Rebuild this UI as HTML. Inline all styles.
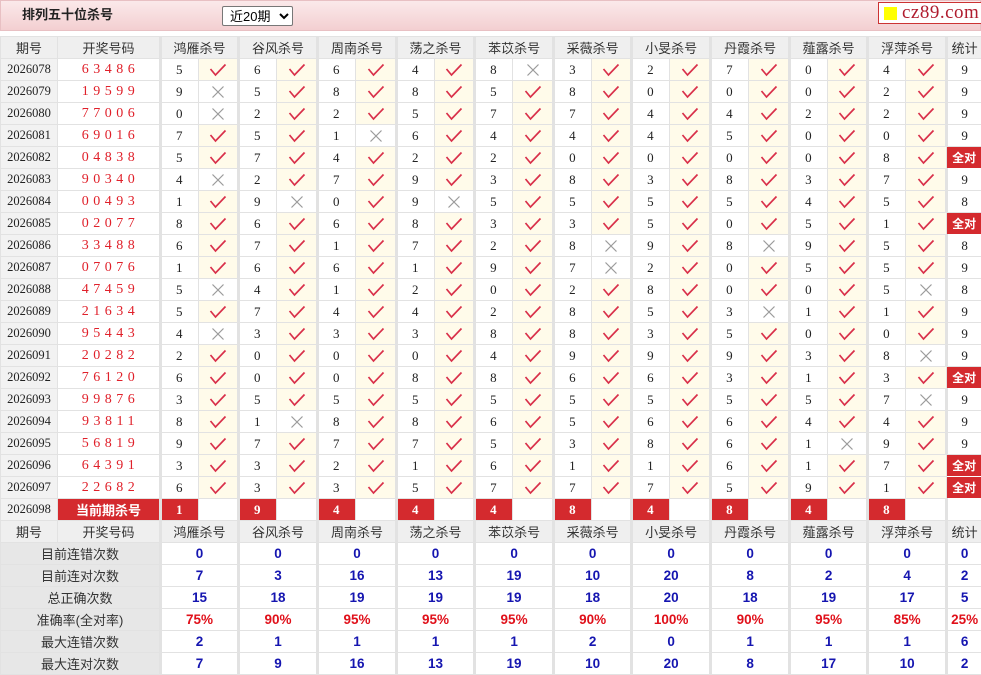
<!DOCTYPE html>
<html><head><meta charset="utf-8">
<style>
*{margin:0;padding:0;box-sizing:border-box}
body{width:981px;height:674px;overflow:hidden;background:#fff;font-family:"Liberation Sans","Noto Sans CJK SC",sans-serif;font-size:13px;color:#222}
.top{position:absolute;left:0;top:0;width:981px;height:31px;background:linear-gradient(#fbe9ea,#f3cfd1);border:1px solid #e8c0c3}
.top .t{position:absolute;left:21px;top:6px;line-height:16px;font-weight:bold;font-size:13px;color:#222}
.top select{position:absolute;left:221px;top:5px;width:71px;height:20px;font-size:13px;font-family:"Liberation Sans","Noto Sans CJK SC",sans-serif;border:1px solid #777;border-radius:2px;background:#fff;padding-left:3px}
.logo{position:absolute;left:877px;top:1px;width:104px;height:22px;border:1px solid #c33;background:#fff;font-family:"Liberation Serif",serif;font-size:19px;color:#b01c2e;line-height:19px;padding-left:23px;letter-spacing:0.5px}
.logo i{position:absolute;left:5px;top:4px;width:13px;height:13px;background:#ff0}
table{position:absolute;left:0;top:36px;border-collapse:collapse;table-layout:fixed;width:981px}
td{height:22px;border:1px solid #e2e2e2;text-align:center;padding:0;white-space:nowrap;overflow:hidden;font-family:"Liberation Serif","Noto Sans CJK SC",serif;font-size:13px}
tr.h td{background:#efefef;font-family:"Liberation Sans","Noto Sans CJK SC",sans-serif;color:#333}
td.p{background:#f2f2f2;font-size:12.5px}
td.d{color:#e0202a;letter-spacing:4.5px;font-size:14px;padding-left:4px}
td.g{border-left:3px solid #e2e2e2}
td.n{text-align:left;padding-left:14px}
td.c{background:#fffbea}
td.q{background:#d42a2e;color:#fff;font-weight:bold;font-family:"Liberation Sans","Noto Sans CJK SC",sans-serif;font-size:12px;border:1px solid #fff}
td.k{background:#d42a2e;color:#fff;font-weight:bold;text-align:left;padding-left:14px}
td.kk{background:#d42a2e;color:#fff;font-weight:bold;font-family:"Liberation Sans","Noto Sans CJK SC",sans-serif}
td.l{background:#e7e7e7;font-family:"Liberation Sans","Noto Sans CJK SC",sans-serif;color:#333}
td.s{color:#1515b0;font-weight:bold;font-family:"Liberation Sans",sans-serif;font-size:13.5px}
td.r{color:#e0101a;font-weight:bold;font-family:"Liberation Sans",sans-serif;font-size:13.5px}
svg{display:block;margin:auto}
</style></head><body>
<svg width="0" height="0" style="position:absolute"><defs>
<symbol id="ok" viewBox="0 0 18 14"><path d="M1.5 6 L6.5 12 L16.5 1.5" fill="none" stroke="#d9304a" stroke-width="1.7"/></symbol>
<symbol id="no" viewBox="0 0 14 14"><path d="M1.5 1.5 L12.5 12.5 M12.5 1.5 L1.5 12.5" fill="none" stroke="#9a9a9a" stroke-width="1.2"/></symbol>
</defs></svg>
<div class="top"><span class="t">排列五十位杀号</span><select><option>近20期</option></select><div class="logo"><i></i>cz89.com</div></div>
<table id="t">
<colgroup><col style="width:57px"><col style="width:103px">
<col style="width:38px"><col style="width:40px"><col style="width:38px"><col style="width:41px"><col style="width:38px"><col style="width:41px"><col style="width:38px"><col style="width:40px"><col style="width:38px"><col style="width:41px"><col style="width:38px"><col style="width:40px"><col style="width:38px"><col style="width:41px"><col style="width:38px"><col style="width:41px"><col style="width:38px"><col style="width:40px"><col style="width:38px"><col style="width:41px"><col style="width:35px"></colgroup>
<tr class="h"><td>期号</td><td>开奖号码</td><td class="g" colspan="2">鸿雁杀号</td><td class="g" colspan="2">谷风杀号</td><td class="g" colspan="2">周南杀号</td><td class="g" colspan="2">荡之杀号</td><td class="g" colspan="2">苯苡杀号</td><td class="g" colspan="2">采薇杀号</td><td class="g" colspan="2">小旻杀号</td><td class="g" colspan="2">丹霞杀号</td><td class="g" colspan="2">薤露杀号</td><td class="g" colspan="2">浮萍杀号</td><td class="g">统计</td></tr>
<tr><td class="p">2026078</td><td class="d">63486</td><td class="g n">5</td><td class="c"><svg width="18" height="14"><use href="#ok"/></svg></td><td class="g n">6</td><td class="c"><svg width="18" height="14"><use href="#ok"/></svg></td><td class="g n">6</td><td class="c"><svg width="18" height="14"><use href="#ok"/></svg></td><td class="g n">4</td><td class="c"><svg width="18" height="14"><use href="#ok"/></svg></td><td class="g n">8</td><td><svg width="14" height="14"><use href="#no"/></svg></td><td class="g n">3</td><td class="c"><svg width="18" height="14"><use href="#ok"/></svg></td><td class="g n">2</td><td class="c"><svg width="18" height="14"><use href="#ok"/></svg></td><td class="g n">7</td><td class="c"><svg width="18" height="14"><use href="#ok"/></svg></td><td class="g n">0</td><td class="c"><svg width="18" height="14"><use href="#ok"/></svg></td><td class="g n">4</td><td class="c"><svg width="18" height="14"><use href="#ok"/></svg></td><td class="g">9</td></tr>
<tr><td class="p">2026079</td><td class="d">19599</td><td class="g n">9</td><td><svg width="14" height="14"><use href="#no"/></svg></td><td class="g n">5</td><td class="c"><svg width="18" height="14"><use href="#ok"/></svg></td><td class="g n">8</td><td class="c"><svg width="18" height="14"><use href="#ok"/></svg></td><td class="g n">8</td><td class="c"><svg width="18" height="14"><use href="#ok"/></svg></td><td class="g n">5</td><td class="c"><svg width="18" height="14"><use href="#ok"/></svg></td><td class="g n">8</td><td class="c"><svg width="18" height="14"><use href="#ok"/></svg></td><td class="g n">0</td><td class="c"><svg width="18" height="14"><use href="#ok"/></svg></td><td class="g n">0</td><td class="c"><svg width="18" height="14"><use href="#ok"/></svg></td><td class="g n">0</td><td class="c"><svg width="18" height="14"><use href="#ok"/></svg></td><td class="g n">2</td><td class="c"><svg width="18" height="14"><use href="#ok"/></svg></td><td class="g">9</td></tr>
<tr><td class="p">2026080</td><td class="d">77006</td><td class="g n">0</td><td><svg width="14" height="14"><use href="#no"/></svg></td><td class="g n">2</td><td class="c"><svg width="18" height="14"><use href="#ok"/></svg></td><td class="g n">2</td><td class="c"><svg width="18" height="14"><use href="#ok"/></svg></td><td class="g n">5</td><td class="c"><svg width="18" height="14"><use href="#ok"/></svg></td><td class="g n">7</td><td class="c"><svg width="18" height="14"><use href="#ok"/></svg></td><td class="g n">7</td><td class="c"><svg width="18" height="14"><use href="#ok"/></svg></td><td class="g n">4</td><td class="c"><svg width="18" height="14"><use href="#ok"/></svg></td><td class="g n">4</td><td class="c"><svg width="18" height="14"><use href="#ok"/></svg></td><td class="g n">2</td><td class="c"><svg width="18" height="14"><use href="#ok"/></svg></td><td class="g n">2</td><td class="c"><svg width="18" height="14"><use href="#ok"/></svg></td><td class="g">9</td></tr>
<tr><td class="p">2026081</td><td class="d">69016</td><td class="g n">7</td><td class="c"><svg width="18" height="14"><use href="#ok"/></svg></td><td class="g n">5</td><td class="c"><svg width="18" height="14"><use href="#ok"/></svg></td><td class="g n">1</td><td><svg width="14" height="14"><use href="#no"/></svg></td><td class="g n">6</td><td class="c"><svg width="18" height="14"><use href="#ok"/></svg></td><td class="g n">4</td><td class="c"><svg width="18" height="14"><use href="#ok"/></svg></td><td class="g n">4</td><td class="c"><svg width="18" height="14"><use href="#ok"/></svg></td><td class="g n">4</td><td class="c"><svg width="18" height="14"><use href="#ok"/></svg></td><td class="g n">5</td><td class="c"><svg width="18" height="14"><use href="#ok"/></svg></td><td class="g n">0</td><td class="c"><svg width="18" height="14"><use href="#ok"/></svg></td><td class="g n">0</td><td class="c"><svg width="18" height="14"><use href="#ok"/></svg></td><td class="g">9</td></tr>
<tr><td class="p">2026082</td><td class="d">04838</td><td class="g n">5</td><td class="c"><svg width="18" height="14"><use href="#ok"/></svg></td><td class="g n">7</td><td class="c"><svg width="18" height="14"><use href="#ok"/></svg></td><td class="g n">4</td><td class="c"><svg width="18" height="14"><use href="#ok"/></svg></td><td class="g n">2</td><td class="c"><svg width="18" height="14"><use href="#ok"/></svg></td><td class="g n">2</td><td class="c"><svg width="18" height="14"><use href="#ok"/></svg></td><td class="g n">0</td><td class="c"><svg width="18" height="14"><use href="#ok"/></svg></td><td class="g n">0</td><td class="c"><svg width="18" height="14"><use href="#ok"/></svg></td><td class="g n">0</td><td class="c"><svg width="18" height="14"><use href="#ok"/></svg></td><td class="g n">0</td><td class="c"><svg width="18" height="14"><use href="#ok"/></svg></td><td class="g n">8</td><td class="c"><svg width="18" height="14"><use href="#ok"/></svg></td><td class="g q">全对</td></tr>
<tr><td class="p">2026083</td><td class="d">90340</td><td class="g n">4</td><td><svg width="14" height="14"><use href="#no"/></svg></td><td class="g n">2</td><td class="c"><svg width="18" height="14"><use href="#ok"/></svg></td><td class="g n">7</td><td class="c"><svg width="18" height="14"><use href="#ok"/></svg></td><td class="g n">9</td><td class="c"><svg width="18" height="14"><use href="#ok"/></svg></td><td class="g n">3</td><td class="c"><svg width="18" height="14"><use href="#ok"/></svg></td><td class="g n">8</td><td class="c"><svg width="18" height="14"><use href="#ok"/></svg></td><td class="g n">3</td><td class="c"><svg width="18" height="14"><use href="#ok"/></svg></td><td class="g n">8</td><td class="c"><svg width="18" height="14"><use href="#ok"/></svg></td><td class="g n">3</td><td class="c"><svg width="18" height="14"><use href="#ok"/></svg></td><td class="g n">7</td><td class="c"><svg width="18" height="14"><use href="#ok"/></svg></td><td class="g">9</td></tr>
<tr><td class="p">2026084</td><td class="d">00493</td><td class="g n">1</td><td class="c"><svg width="18" height="14"><use href="#ok"/></svg></td><td class="g n">9</td><td><svg width="14" height="14"><use href="#no"/></svg></td><td class="g n">0</td><td class="c"><svg width="18" height="14"><use href="#ok"/></svg></td><td class="g n">9</td><td><svg width="14" height="14"><use href="#no"/></svg></td><td class="g n">5</td><td class="c"><svg width="18" height="14"><use href="#ok"/></svg></td><td class="g n">5</td><td class="c"><svg width="18" height="14"><use href="#ok"/></svg></td><td class="g n">5</td><td class="c"><svg width="18" height="14"><use href="#ok"/></svg></td><td class="g n">5</td><td class="c"><svg width="18" height="14"><use href="#ok"/></svg></td><td class="g n">4</td><td class="c"><svg width="18" height="14"><use href="#ok"/></svg></td><td class="g n">5</td><td class="c"><svg width="18" height="14"><use href="#ok"/></svg></td><td class="g">8</td></tr>
<tr><td class="p">2026085</td><td class="d">02077</td><td class="g n">8</td><td class="c"><svg width="18" height="14"><use href="#ok"/></svg></td><td class="g n">6</td><td class="c"><svg width="18" height="14"><use href="#ok"/></svg></td><td class="g n">6</td><td class="c"><svg width="18" height="14"><use href="#ok"/></svg></td><td class="g n">8</td><td class="c"><svg width="18" height="14"><use href="#ok"/></svg></td><td class="g n">3</td><td class="c"><svg width="18" height="14"><use href="#ok"/></svg></td><td class="g n">3</td><td class="c"><svg width="18" height="14"><use href="#ok"/></svg></td><td class="g n">5</td><td class="c"><svg width="18" height="14"><use href="#ok"/></svg></td><td class="g n">0</td><td class="c"><svg width="18" height="14"><use href="#ok"/></svg></td><td class="g n">5</td><td class="c"><svg width="18" height="14"><use href="#ok"/></svg></td><td class="g n">1</td><td class="c"><svg width="18" height="14"><use href="#ok"/></svg></td><td class="g q">全对</td></tr>
<tr><td class="p">2026086</td><td class="d">33488</td><td class="g n">6</td><td class="c"><svg width="18" height="14"><use href="#ok"/></svg></td><td class="g n">7</td><td class="c"><svg width="18" height="14"><use href="#ok"/></svg></td><td class="g n">1</td><td class="c"><svg width="18" height="14"><use href="#ok"/></svg></td><td class="g n">7</td><td class="c"><svg width="18" height="14"><use href="#ok"/></svg></td><td class="g n">2</td><td class="c"><svg width="18" height="14"><use href="#ok"/></svg></td><td class="g n">8</td><td><svg width="14" height="14"><use href="#no"/></svg></td><td class="g n">9</td><td class="c"><svg width="18" height="14"><use href="#ok"/></svg></td><td class="g n">8</td><td><svg width="14" height="14"><use href="#no"/></svg></td><td class="g n">9</td><td class="c"><svg width="18" height="14"><use href="#ok"/></svg></td><td class="g n">5</td><td class="c"><svg width="18" height="14"><use href="#ok"/></svg></td><td class="g">8</td></tr>
<tr><td class="p">2026087</td><td class="d">07076</td><td class="g n">1</td><td class="c"><svg width="18" height="14"><use href="#ok"/></svg></td><td class="g n">6</td><td class="c"><svg width="18" height="14"><use href="#ok"/></svg></td><td class="g n">6</td><td class="c"><svg width="18" height="14"><use href="#ok"/></svg></td><td class="g n">1</td><td class="c"><svg width="18" height="14"><use href="#ok"/></svg></td><td class="g n">9</td><td class="c"><svg width="18" height="14"><use href="#ok"/></svg></td><td class="g n">7</td><td><svg width="14" height="14"><use href="#no"/></svg></td><td class="g n">2</td><td class="c"><svg width="18" height="14"><use href="#ok"/></svg></td><td class="g n">0</td><td class="c"><svg width="18" height="14"><use href="#ok"/></svg></td><td class="g n">5</td><td class="c"><svg width="18" height="14"><use href="#ok"/></svg></td><td class="g n">5</td><td class="c"><svg width="18" height="14"><use href="#ok"/></svg></td><td class="g">9</td></tr>
<tr><td class="p">2026088</td><td class="d">47459</td><td class="g n">5</td><td><svg width="14" height="14"><use href="#no"/></svg></td><td class="g n">4</td><td class="c"><svg width="18" height="14"><use href="#ok"/></svg></td><td class="g n">1</td><td class="c"><svg width="18" height="14"><use href="#ok"/></svg></td><td class="g n">2</td><td class="c"><svg width="18" height="14"><use href="#ok"/></svg></td><td class="g n">0</td><td class="c"><svg width="18" height="14"><use href="#ok"/></svg></td><td class="g n">2</td><td class="c"><svg width="18" height="14"><use href="#ok"/></svg></td><td class="g n">8</td><td class="c"><svg width="18" height="14"><use href="#ok"/></svg></td><td class="g n">0</td><td class="c"><svg width="18" height="14"><use href="#ok"/></svg></td><td class="g n">0</td><td class="c"><svg width="18" height="14"><use href="#ok"/></svg></td><td class="g n">5</td><td><svg width="14" height="14"><use href="#no"/></svg></td><td class="g">8</td></tr>
<tr><td class="p">2026089</td><td class="d">21634</td><td class="g n">5</td><td class="c"><svg width="18" height="14"><use href="#ok"/></svg></td><td class="g n">7</td><td class="c"><svg width="18" height="14"><use href="#ok"/></svg></td><td class="g n">4</td><td class="c"><svg width="18" height="14"><use href="#ok"/></svg></td><td class="g n">4</td><td class="c"><svg width="18" height="14"><use href="#ok"/></svg></td><td class="g n">2</td><td class="c"><svg width="18" height="14"><use href="#ok"/></svg></td><td class="g n">8</td><td class="c"><svg width="18" height="14"><use href="#ok"/></svg></td><td class="g n">5</td><td class="c"><svg width="18" height="14"><use href="#ok"/></svg></td><td class="g n">3</td><td><svg width="14" height="14"><use href="#no"/></svg></td><td class="g n">1</td><td class="c"><svg width="18" height="14"><use href="#ok"/></svg></td><td class="g n">1</td><td class="c"><svg width="18" height="14"><use href="#ok"/></svg></td><td class="g">9</td></tr>
<tr><td class="p">2026090</td><td class="d">95443</td><td class="g n">4</td><td><svg width="14" height="14"><use href="#no"/></svg></td><td class="g n">3</td><td class="c"><svg width="18" height="14"><use href="#ok"/></svg></td><td class="g n">3</td><td class="c"><svg width="18" height="14"><use href="#ok"/></svg></td><td class="g n">3</td><td class="c"><svg width="18" height="14"><use href="#ok"/></svg></td><td class="g n">8</td><td class="c"><svg width="18" height="14"><use href="#ok"/></svg></td><td class="g n">8</td><td class="c"><svg width="18" height="14"><use href="#ok"/></svg></td><td class="g n">3</td><td class="c"><svg width="18" height="14"><use href="#ok"/></svg></td><td class="g n">5</td><td class="c"><svg width="18" height="14"><use href="#ok"/></svg></td><td class="g n">0</td><td class="c"><svg width="18" height="14"><use href="#ok"/></svg></td><td class="g n">0</td><td class="c"><svg width="18" height="14"><use href="#ok"/></svg></td><td class="g">9</td></tr>
<tr><td class="p">2026091</td><td class="d">20282</td><td class="g n">2</td><td class="c"><svg width="18" height="14"><use href="#ok"/></svg></td><td class="g n">0</td><td class="c"><svg width="18" height="14"><use href="#ok"/></svg></td><td class="g n">0</td><td class="c"><svg width="18" height="14"><use href="#ok"/></svg></td><td class="g n">0</td><td class="c"><svg width="18" height="14"><use href="#ok"/></svg></td><td class="g n">4</td><td class="c"><svg width="18" height="14"><use href="#ok"/></svg></td><td class="g n">9</td><td class="c"><svg width="18" height="14"><use href="#ok"/></svg></td><td class="g n">9</td><td class="c"><svg width="18" height="14"><use href="#ok"/></svg></td><td class="g n">9</td><td class="c"><svg width="18" height="14"><use href="#ok"/></svg></td><td class="g n">3</td><td class="c"><svg width="18" height="14"><use href="#ok"/></svg></td><td class="g n">8</td><td><svg width="14" height="14"><use href="#no"/></svg></td><td class="g">9</td></tr>
<tr><td class="p">2026092</td><td class="d">76120</td><td class="g n">6</td><td class="c"><svg width="18" height="14"><use href="#ok"/></svg></td><td class="g n">0</td><td class="c"><svg width="18" height="14"><use href="#ok"/></svg></td><td class="g n">0</td><td class="c"><svg width="18" height="14"><use href="#ok"/></svg></td><td class="g n">8</td><td class="c"><svg width="18" height="14"><use href="#ok"/></svg></td><td class="g n">8</td><td class="c"><svg width="18" height="14"><use href="#ok"/></svg></td><td class="g n">6</td><td class="c"><svg width="18" height="14"><use href="#ok"/></svg></td><td class="g n">6</td><td class="c"><svg width="18" height="14"><use href="#ok"/></svg></td><td class="g n">3</td><td class="c"><svg width="18" height="14"><use href="#ok"/></svg></td><td class="g n">1</td><td class="c"><svg width="18" height="14"><use href="#ok"/></svg></td><td class="g n">3</td><td class="c"><svg width="18" height="14"><use href="#ok"/></svg></td><td class="g q">全对</td></tr>
<tr><td class="p">2026093</td><td class="d">99876</td><td class="g n">3</td><td class="c"><svg width="18" height="14"><use href="#ok"/></svg></td><td class="g n">5</td><td class="c"><svg width="18" height="14"><use href="#ok"/></svg></td><td class="g n">5</td><td class="c"><svg width="18" height="14"><use href="#ok"/></svg></td><td class="g n">5</td><td class="c"><svg width="18" height="14"><use href="#ok"/></svg></td><td class="g n">5</td><td class="c"><svg width="18" height="14"><use href="#ok"/></svg></td><td class="g n">5</td><td class="c"><svg width="18" height="14"><use href="#ok"/></svg></td><td class="g n">5</td><td class="c"><svg width="18" height="14"><use href="#ok"/></svg></td><td class="g n">5</td><td class="c"><svg width="18" height="14"><use href="#ok"/></svg></td><td class="g n">5</td><td class="c"><svg width="18" height="14"><use href="#ok"/></svg></td><td class="g n">7</td><td><svg width="14" height="14"><use href="#no"/></svg></td><td class="g">9</td></tr>
<tr><td class="p">2026094</td><td class="d">93811</td><td class="g n">8</td><td class="c"><svg width="18" height="14"><use href="#ok"/></svg></td><td class="g n">1</td><td><svg width="14" height="14"><use href="#no"/></svg></td><td class="g n">8</td><td class="c"><svg width="18" height="14"><use href="#ok"/></svg></td><td class="g n">8</td><td class="c"><svg width="18" height="14"><use href="#ok"/></svg></td><td class="g n">6</td><td class="c"><svg width="18" height="14"><use href="#ok"/></svg></td><td class="g n">5</td><td class="c"><svg width="18" height="14"><use href="#ok"/></svg></td><td class="g n">6</td><td class="c"><svg width="18" height="14"><use href="#ok"/></svg></td><td class="g n">6</td><td class="c"><svg width="18" height="14"><use href="#ok"/></svg></td><td class="g n">4</td><td class="c"><svg width="18" height="14"><use href="#ok"/></svg></td><td class="g n">4</td><td class="c"><svg width="18" height="14"><use href="#ok"/></svg></td><td class="g">9</td></tr>
<tr><td class="p">2026095</td><td class="d">56819</td><td class="g n">9</td><td class="c"><svg width="18" height="14"><use href="#ok"/></svg></td><td class="g n">7</td><td class="c"><svg width="18" height="14"><use href="#ok"/></svg></td><td class="g n">7</td><td class="c"><svg width="18" height="14"><use href="#ok"/></svg></td><td class="g n">7</td><td class="c"><svg width="18" height="14"><use href="#ok"/></svg></td><td class="g n">5</td><td class="c"><svg width="18" height="14"><use href="#ok"/></svg></td><td class="g n">3</td><td class="c"><svg width="18" height="14"><use href="#ok"/></svg></td><td class="g n">8</td><td class="c"><svg width="18" height="14"><use href="#ok"/></svg></td><td class="g n">6</td><td class="c"><svg width="18" height="14"><use href="#ok"/></svg></td><td class="g n">1</td><td><svg width="14" height="14"><use href="#no"/></svg></td><td class="g n">9</td><td class="c"><svg width="18" height="14"><use href="#ok"/></svg></td><td class="g">9</td></tr>
<tr><td class="p">2026096</td><td class="d">64391</td><td class="g n">3</td><td class="c"><svg width="18" height="14"><use href="#ok"/></svg></td><td class="g n">3</td><td class="c"><svg width="18" height="14"><use href="#ok"/></svg></td><td class="g n">2</td><td class="c"><svg width="18" height="14"><use href="#ok"/></svg></td><td class="g n">1</td><td class="c"><svg width="18" height="14"><use href="#ok"/></svg></td><td class="g n">6</td><td class="c"><svg width="18" height="14"><use href="#ok"/></svg></td><td class="g n">1</td><td class="c"><svg width="18" height="14"><use href="#ok"/></svg></td><td class="g n">1</td><td class="c"><svg width="18" height="14"><use href="#ok"/></svg></td><td class="g n">6</td><td class="c"><svg width="18" height="14"><use href="#ok"/></svg></td><td class="g n">1</td><td class="c"><svg width="18" height="14"><use href="#ok"/></svg></td><td class="g n">7</td><td class="c"><svg width="18" height="14"><use href="#ok"/></svg></td><td class="g q">全对</td></tr>
<tr><td class="p">2026097</td><td class="d">22682</td><td class="g n">6</td><td class="c"><svg width="18" height="14"><use href="#ok"/></svg></td><td class="g n">3</td><td class="c"><svg width="18" height="14"><use href="#ok"/></svg></td><td class="g n">3</td><td class="c"><svg width="18" height="14"><use href="#ok"/></svg></td><td class="g n">5</td><td class="c"><svg width="18" height="14"><use href="#ok"/></svg></td><td class="g n">7</td><td class="c"><svg width="18" height="14"><use href="#ok"/></svg></td><td class="g n">7</td><td class="c"><svg width="18" height="14"><use href="#ok"/></svg></td><td class="g n">7</td><td class="c"><svg width="18" height="14"><use href="#ok"/></svg></td><td class="g n">5</td><td class="c"><svg width="18" height="14"><use href="#ok"/></svg></td><td class="g n">9</td><td class="c"><svg width="18" height="14"><use href="#ok"/></svg></td><td class="g n">1</td><td class="c"><svg width="18" height="14"><use href="#ok"/></svg></td><td class="g q">全对</td></tr>
<tr><td class="p">2026098</td><td class="kk">当前期杀号</td><td class="g k">1</td><td></td><td class="g k">9</td><td></td><td class="g k">4</td><td></td><td class="g k">4</td><td></td><td class="g k">4</td><td></td><td class="g k">8</td><td></td><td class="g k">4</td><td></td><td class="g k">8</td><td></td><td class="g k">4</td><td></td><td class="g k">8</td><td></td><td class="g"></td></tr>
<tr class="h"><td>期号</td><td>开奖号码</td><td class="g" colspan="2">鸿雁杀号</td><td class="g" colspan="2">谷风杀号</td><td class="g" colspan="2">周南杀号</td><td class="g" colspan="2">荡之杀号</td><td class="g" colspan="2">苯苡杀号</td><td class="g" colspan="2">采薇杀号</td><td class="g" colspan="2">小旻杀号</td><td class="g" colspan="2">丹霞杀号</td><td class="g" colspan="2">薤露杀号</td><td class="g" colspan="2">浮萍杀号</td><td class="g">统计</td></tr>
<tr><td class="l" colspan="2">目前连错次数</td><td class="g s" colspan="2">0</td><td class="g s" colspan="2">0</td><td class="g s" colspan="2">0</td><td class="g s" colspan="2">0</td><td class="g s" colspan="2">0</td><td class="g s" colspan="2">0</td><td class="g s" colspan="2">0</td><td class="g s" colspan="2">0</td><td class="g s" colspan="2">0</td><td class="g s" colspan="2">0</td><td class="g s">0</td></tr>
<tr><td class="l" colspan="2">目前连对次数</td><td class="g s" colspan="2">7</td><td class="g s" colspan="2">3</td><td class="g s" colspan="2">16</td><td class="g s" colspan="2">13</td><td class="g s" colspan="2">19</td><td class="g s" colspan="2">10</td><td class="g s" colspan="2">20</td><td class="g s" colspan="2">8</td><td class="g s" colspan="2">2</td><td class="g s" colspan="2">4</td><td class="g s">2</td></tr>
<tr><td class="l" colspan="2">总正确次数</td><td class="g s" colspan="2">15</td><td class="g s" colspan="2">18</td><td class="g s" colspan="2">19</td><td class="g s" colspan="2">19</td><td class="g s" colspan="2">19</td><td class="g s" colspan="2">18</td><td class="g s" colspan="2">20</td><td class="g s" colspan="2">18</td><td class="g s" colspan="2">19</td><td class="g s" colspan="2">17</td><td class="g s">5</td></tr>
<tr><td class="l" colspan="2">准确率(全对率)</td><td class="g r" colspan="2">75%</td><td class="g r" colspan="2">90%</td><td class="g r" colspan="2">95%</td><td class="g r" colspan="2">95%</td><td class="g r" colspan="2">95%</td><td class="g r" colspan="2">90%</td><td class="g r" colspan="2">100%</td><td class="g r" colspan="2">90%</td><td class="g r" colspan="2">95%</td><td class="g r" colspan="2">85%</td><td class="g r">25%</td></tr>
<tr><td class="l" colspan="2">最大连错次数</td><td class="g s" colspan="2">2</td><td class="g s" colspan="2">1</td><td class="g s" colspan="2">1</td><td class="g s" colspan="2">1</td><td class="g s" colspan="2">1</td><td class="g s" colspan="2">2</td><td class="g s" colspan="2">0</td><td class="g s" colspan="2">1</td><td class="g s" colspan="2">1</td><td class="g s" colspan="2">1</td><td class="g s">6</td></tr>
<tr><td class="l" colspan="2">最大连对次数</td><td class="g s" colspan="2">7</td><td class="g s" colspan="2">9</td><td class="g s" colspan="2">16</td><td class="g s" colspan="2">13</td><td class="g s" colspan="2">19</td><td class="g s" colspan="2">10</td><td class="g s" colspan="2">20</td><td class="g s" colspan="2">8</td><td class="g s" colspan="2">17</td><td class="g s" colspan="2">10</td><td class="g s">2</td></tr>
</table>
</body></html>
